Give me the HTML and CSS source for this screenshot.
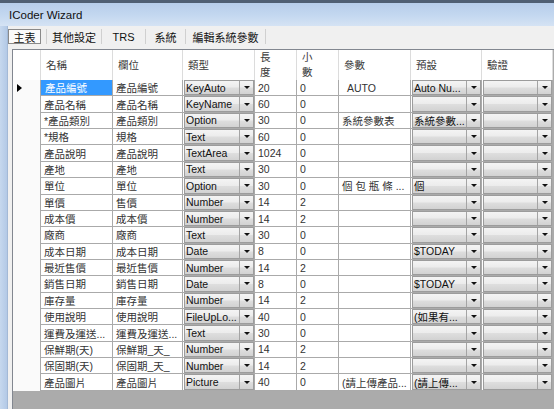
FILE: index.html
```html
<!DOCTYPE html>
<html>
<head>
<meta charset="utf-8">
<link rel="stylesheet" href="styles.css">
</head>
<body>
<div class="topstrip"></div>
<div class="titlebar">ICoder Wizard</div>
<div class="main">
  <div class="frame"></div>
  <div class="content">
    <div class="tabs">
      <div class="tab sel">主表</div>
      <div class="tab w55">其他設定</div>
      <div class="tab w44">TRS</div>
      <div class="tab w40">系統</div>
      <div class="tab w81 last">編輯系統參數</div>
    </div>
    <div class="grid">
      <div class="row head">
        <div class="h"></div>
        <div class="h">名稱</div>
        <div class="h">欄位</div>
        <div class="h">類型</div>
        <div class="h">長<br>度</div>
        <div class="h">小<br>數</div>
        <div class="h">參數</div>
        <div class="h">預設</div>
        <div class="h">驗證</div>
      </div>

      <div class="row">
        <div class="rh cur"></div>
        <div class="c sel">產品編號</div>
        <div class="c">產品編號</div>
        <div class="c cb"><div class="combo"><span class="ct">KeyAuto</span><span class="btn"></span></div></div>
        <div class="c">20</div>
        <div class="c">0</div>
        <div class="c"><span class="ind">AUTO</span></div>
        <div class="c cb"><div class="combo"><span class="ct">Auto Nu...</span><span class="btn"></span></div></div>
        <div class="c cb"><div class="combo"><span class="ct"></span><span class="btn"></span></div></div>
      </div>

      <div class="row">
        <div class="rh"></div>
        <div class="c">產品名稱</div>
        <div class="c">產品名稱</div>
        <div class="c cb"><div class="combo"><span class="ct">KeyName</span><span class="btn"></span></div></div>
        <div class="c">60</div>
        <div class="c">0</div>
        <div class="c"></div>
        <div class="c cb"><div class="combo"><span class="ct"></span><span class="btn"></span></div></div>
        <div class="c cb"><div class="combo"><span class="ct"></span><span class="btn"></span></div></div>
      </div>

      <div class="row">
        <div class="rh"></div>
        <div class="c">*產品類別</div>
        <div class="c">產品類別</div>
        <div class="c cb"><div class="combo"><span class="ct">Option</span><span class="btn"></span></div></div>
        <div class="c">30</div>
        <div class="c">0</div>
        <div class="c">系統參數表</div>
        <div class="c cb"><div class="combo"><span class="ct">系統參數...</span><span class="btn"></span></div></div>
        <div class="c cb"><div class="combo"><span class="ct"></span><span class="btn"></span></div></div>
      </div>

      <div class="row">
        <div class="rh"></div>
        <div class="c">*規格</div>
        <div class="c">規格</div>
        <div class="c cb"><div class="combo"><span class="ct">Text</span><span class="btn"></span></div></div>
        <div class="c">60</div>
        <div class="c">0</div>
        <div class="c"></div>
        <div class="c cb"><div class="combo"><span class="ct"></span><span class="btn"></span></div></div>
        <div class="c cb"><div class="combo"><span class="ct"></span><span class="btn"></span></div></div>
      </div>

      <div class="row">
        <div class="rh"></div>
        <div class="c">產品說明</div>
        <div class="c">產品說明</div>
        <div class="c cb"><div class="combo"><span class="ct">TextArea</span><span class="btn"></span></div></div>
        <div class="c">1024</div>
        <div class="c">0</div>
        <div class="c"></div>
        <div class="c cb"><div class="combo"><span class="ct"></span><span class="btn"></span></div></div>
        <div class="c cb"><div class="combo"><span class="ct"></span><span class="btn"></span></div></div>
      </div>

      <div class="row">
        <div class="rh"></div>
        <div class="c">產地</div>
        <div class="c">產地</div>
        <div class="c cb"><div class="combo"><span class="ct">Text</span><span class="btn"></span></div></div>
        <div class="c">30</div>
        <div class="c">0</div>
        <div class="c"></div>
        <div class="c cb"><div class="combo"><span class="ct"></span><span class="btn"></span></div></div>
        <div class="c cb"><div class="combo"><span class="ct"></span><span class="btn"></span></div></div>
      </div>

      <div class="row">
        <div class="rh"></div>
        <div class="c">單位</div>
        <div class="c">單位</div>
        <div class="c cb"><div class="combo"><span class="ct">Option</span><span class="btn"></span></div></div>
        <div class="c">30</div>
        <div class="c">0</div>
        <div class="c">個 包 瓶 條 ...</div>
        <div class="c cb"><div class="combo"><span class="ct">個</span><span class="btn"></span></div></div>
        <div class="c cb"><div class="combo"><span class="ct"></span><span class="btn"></span></div></div>
      </div>

      <div class="row">
        <div class="rh"></div>
        <div class="c">單價</div>
        <div class="c">售價</div>
        <div class="c cb"><div class="combo"><span class="ct">Number</span><span class="btn"></span></div></div>
        <div class="c">14</div>
        <div class="c">2</div>
        <div class="c"></div>
        <div class="c cb"><div class="combo"><span class="ct"></span><span class="btn"></span></div></div>
        <div class="c cb"><div class="combo"><span class="ct"></span><span class="btn"></span></div></div>
      </div>

      <div class="row">
        <div class="rh"></div>
        <div class="c">成本價</div>
        <div class="c">成本價</div>
        <div class="c cb"><div class="combo"><span class="ct">Number</span><span class="btn"></span></div></div>
        <div class="c">14</div>
        <div class="c">2</div>
        <div class="c"></div>
        <div class="c cb"><div class="combo"><span class="ct"></span><span class="btn"></span></div></div>
        <div class="c cb"><div class="combo"><span class="ct"></span><span class="btn"></span></div></div>
      </div>

      <div class="row">
        <div class="rh"></div>
        <div class="c">廠商</div>
        <div class="c">廠商</div>
        <div class="c cb"><div class="combo"><span class="ct">Text</span><span class="btn"></span></div></div>
        <div class="c">30</div>
        <div class="c">0</div>
        <div class="c"></div>
        <div class="c cb"><div class="combo"><span class="ct"></span><span class="btn"></span></div></div>
        <div class="c cb"><div class="combo"><span class="ct"></span><span class="btn"></span></div></div>
      </div>

      <div class="row">
        <div class="rh"></div>
        <div class="c">成本日期</div>
        <div class="c">成本日期</div>
        <div class="c cb"><div class="combo"><span class="ct">Date</span><span class="btn"></span></div></div>
        <div class="c">8</div>
        <div class="c">0</div>
        <div class="c"></div>
        <div class="c cb"><div class="combo"><span class="ct">$TODAY</span><span class="btn"></span></div></div>
        <div class="c cb"><div class="combo"><span class="ct"></span><span class="btn"></span></div></div>
      </div>

      <div class="row">
        <div class="rh"></div>
        <div class="c">最近售價</div>
        <div class="c">最近售價</div>
        <div class="c cb"><div class="combo"><span class="ct">Number</span><span class="btn"></span></div></div>
        <div class="c">14</div>
        <div class="c">2</div>
        <div class="c"></div>
        <div class="c cb"><div class="combo"><span class="ct"></span><span class="btn"></span></div></div>
        <div class="c cb"><div class="combo"><span class="ct"></span><span class="btn"></span></div></div>
      </div>

      <div class="row">
        <div class="rh"></div>
        <div class="c">銷售日期</div>
        <div class="c">銷售日期</div>
        <div class="c cb"><div class="combo"><span class="ct">Date</span><span class="btn"></span></div></div>
        <div class="c">8</div>
        <div class="c">0</div>
        <div class="c"></div>
        <div class="c cb"><div class="combo"><span class="ct">$TODAY</span><span class="btn"></span></div></div>
        <div class="c cb"><div class="combo"><span class="ct"></span><span class="btn"></span></div></div>
      </div>

      <div class="row">
        <div class="rh"></div>
        <div class="c">庫存量</div>
        <div class="c">庫存量</div>
        <div class="c cb"><div class="combo"><span class="ct">Number</span><span class="btn"></span></div></div>
        <div class="c">14</div>
        <div class="c">2</div>
        <div class="c"></div>
        <div class="c cb"><div class="combo"><span class="ct"></span><span class="btn"></span></div></div>
        <div class="c cb"><div class="combo"><span class="ct"></span><span class="btn"></span></div></div>
      </div>

      <div class="row">
        <div class="rh"></div>
        <div class="c">使用說明</div>
        <div class="c">使用說明</div>
        <div class="c cb"><div class="combo"><span class="ct">FileUpLo...</span><span class="btn"></span></div></div>
        <div class="c">40</div>
        <div class="c">0</div>
        <div class="c"></div>
        <div class="c cb"><div class="combo"><span class="ct">(如果有...</span><span class="btn"></span></div></div>
        <div class="c cb"><div class="combo"><span class="ct"></span><span class="btn"></span></div></div>
      </div>

      <div class="row">
        <div class="rh"></div>
        <div class="c">運費及運送...</div>
        <div class="c">運費及運送...</div>
        <div class="c cb"><div class="combo"><span class="ct">Text</span><span class="btn"></span></div></div>
        <div class="c">30</div>
        <div class="c">0</div>
        <div class="c"></div>
        <div class="c cb"><div class="combo"><span class="ct"></span><span class="btn"></span></div></div>
        <div class="c cb"><div class="combo"><span class="ct"></span><span class="btn"></span></div></div>
      </div>

      <div class="row">
        <div class="rh"></div>
        <div class="c">保鮮期(天)</div>
        <div class="c">保鮮期_天_</div>
        <div class="c cb"><div class="combo"><span class="ct">Number</span><span class="btn"></span></div></div>
        <div class="c">14</div>
        <div class="c">2</div>
        <div class="c"></div>
        <div class="c cb"><div class="combo"><span class="ct"></span><span class="btn"></span></div></div>
        <div class="c cb"><div class="combo"><span class="ct"></span><span class="btn"></span></div></div>
      </div>

      <div class="row">
        <div class="rh"></div>
        <div class="c">保固期(天)</div>
        <div class="c">保固期_天_</div>
        <div class="c cb"><div class="combo"><span class="ct">Number</span><span class="btn"></span></div></div>
        <div class="c">14</div>
        <div class="c">2</div>
        <div class="c"></div>
        <div class="c cb"><div class="combo"><span class="ct"></span><span class="btn"></span></div></div>
        <div class="c cb"><div class="combo"><span class="ct"></span><span class="btn"></span></div></div>
      </div>

      <div class="row">
        <div class="rh"></div>
        <div class="c">產品圖片</div>
        <div class="c">產品圖片</div>
        <div class="c cb"><div class="combo"><span class="ct">Picture</span><span class="btn"></span></div></div>
        <div class="c">40</div>
        <div class="c">0</div>
        <div class="c">(請上傳產品...</div>
        <div class="c cb"><div class="combo"><span class="ct">(請上傳...</span><span class="btn"></span></div></div>
        <div class="c cb"><div class="combo"><span class="ct"></span><span class="btn"></span></div></div>
      </div>
    </div>
  </div>
</div>
</body>
</html>
```

FILE: styles.css
```css
* { box-sizing: border-box; }
html, body { margin: 0; padding: 0; }
body {
  width: 554px;
  height: 409px;
  overflow: hidden;
  background: #f0f0f0;
  font-family: "Liberation Sans", "Noto Sans CJK TC", sans-serif;
  color: #1a1a1a;
}
.topstrip { height: 3px; background: #4f5f74; }
.titlebar {
  height: 23px;
  padding-left: 9px;
  display: flex;
  align-items: center;
  font-size: 11.5px;
  color: #111;
  background: linear-gradient(#b6cdeb, #c4d8f0 55%, #d5e3f4);
}
.main { display: flex; height: 383px; }
.frame {
  width: 8px;
  flex: none;
  background: linear-gradient(to right, #c6d8ee, #b3c9e6);
  border-right: 1px solid #a3b9d6;
}
.content { flex: 1; min-width: 0; display: flex; flex-direction: column; }
.tabs {
  height: 23px;
  flex: none;
  display: flex;
  align-items: flex-start;
  padding-top: 3px;
  font-size: 11px;
  color: #111;
}
.tab {
  height: 15px;
  display: flex;
  align-items: center;
  justify-content: center;
  border-left: 1px solid #d0d0d0;
  white-space: nowrap;
}
.tab.sel {
  width: 33px;
  margin-right: 5px;
  border: 1px solid #8a8a8a;
  background: #fbfbfb;
}
.tab.last { border-right: 1px solid #d0d0d0; }
.w55 { width: 55px; }
.w44 { width: 44px; }
.w40 { width: 40px; }
.w81 { width: 81px; }

.grid {
  flex: 1;
  margin-left: 4px;
  border-top: 1px solid #828790;
  border-left: 1px solid #828790;
  background: #ababab;
  overflow: hidden;
}
.row {
  display: grid;
  grid-template-columns: 28px 72px 70px 72px 42px 42px 72px 71px 71px;
  height: 16.37px;
  font-size: 10.5px;
}
.row.head { height: 30px; }
.h {
  background: #fff;
  border-right: 1px solid #dcdcdc;
  border-bottom: 1px solid #a9a9a9;
  padding-left: 5px;
  display: flex;
  align-items: center;
  line-height: 15px;
  color: #3a3a3a;
}
.rh {
  background: #fafafa;
  border-right: 1px solid #aaaaaa;
  display: flex;
  align-items: center;
  padding-left: 4px;
}
.rh.cur::before {
  content: "";
  border-left: 5px solid #000;
  border-top: 4px solid transparent;
  border-bottom: 4px solid transparent;
}
.c {
  background: #fff;
  border-right: 1px solid #aaaaaa;
  border-bottom: 1px solid #aaaaaa;
  padding-left: 3px;
  display: flex;
  align-items: center;
  white-space: nowrap;
  overflow: hidden;
  color: #333;
}
.c.sel { background: #3399ff; color: #fff; padding-left: 4px; }
.ind { padding-left: 5px; }
.c.cb { padding: 0 0 0 1px; align-items: stretch; }
.combo {
  flex: 1;
  display: flex;
  border: 1px solid #9c9c9c;
  background: linear-gradient(#f4f4f4, #ececec 48%, #dedede 52%, #d2d2d2);
  min-width: 0;
}
.ct {
  flex: 1;
  min-width: 0;
  padding-left: 1px;
  display: flex;
  align-items: center;
  overflow: hidden;
  color: #111;
}
.btn {
  width: 14px;
  flex: none;
  border-left: 1px solid #a4a4a4;
  display: flex;
  align-items: center;
  justify-content: center;
}
.btn::after {
  content: "";
  border-left: 3px solid transparent;
  border-right: 3px solid transparent;
  border-top: 3px solid #111;
}
```
